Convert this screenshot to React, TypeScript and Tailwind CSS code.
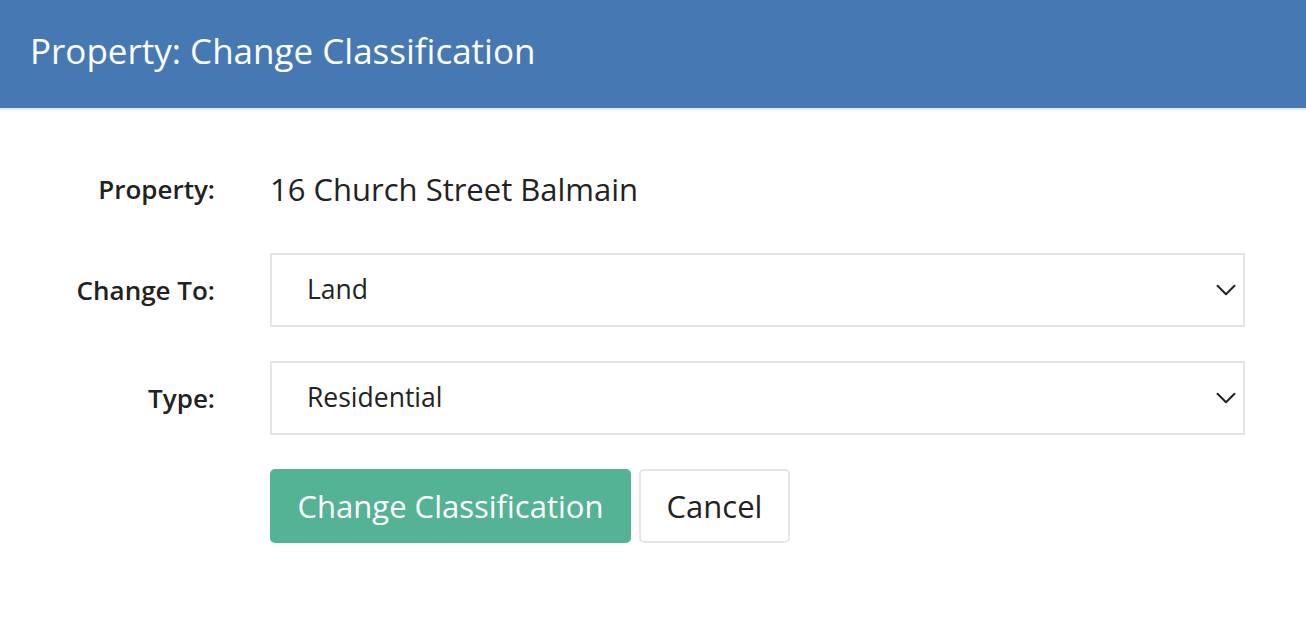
import { ChevronDown } from "lucide-react"

const font = { fontFamily: '"Open Sans", "Noto Sans", sans-serif' }

function Select({ value }: { value: string }) {
  return (
    <div className="flex h-[74px] w-[975px] items-center justify-between border-2 border-[#e4e4e4] bg-white pl-[35px] text-[26.5px] text-[#222]">
      <span>{value}</span>
      <ChevronDown className="h-[34px] w-[34px] text-[#222]" strokeWidth={1.4} />
    </div>
  )
}

export default function App() {
  return (
    <div className="min-h-[640px] w-full bg-white" style={font}>
      <header className="flex h-[110px] items-center border-b-2 border-[#e6e6e6] bg-[#4679b3] pb-[6px] pl-[30px]">
        <h1 className="text-[35px] font-normal text-white">Property: Change Classification</h1>
      </header>

      <div className="grid grid-cols-[215px_975px] items-center gap-x-[55px] pt-[42px]">
        <label className="text-right text-[26px] font-semibold text-[#222]">Property:</label>
        <div className="flex h-[74px] items-center text-[31px] text-[#222]">16 Church Street Balmain</div>

        <label className="mt-[27px] text-right text-[26px] font-semibold text-[#222]">Change To:</label>
        <div className="mt-[27px]">
          <Select value="Land" />
        </div>

        <label className="mt-[34px] text-right text-[26px] font-semibold text-[#222]">Type:</label>
        <div className="mt-[34px]">
          <Select value="Residential" />
        </div>

        <div />
        <div className="mt-[34px] flex gap-[8px]">
          <button className="h-[74px] w-[361px] rounded-[5px] bg-[#54b295] text-[31px] text-white">
            Change Classification
          </button>
          <button className="h-[74px] w-[151px] rounded-[5px] border-2 border-[#e6e6e6] bg-white text-[31px] text-[#222]">
            Cancel
          </button>
        </div>
      </div>
    </div>
  )
}
